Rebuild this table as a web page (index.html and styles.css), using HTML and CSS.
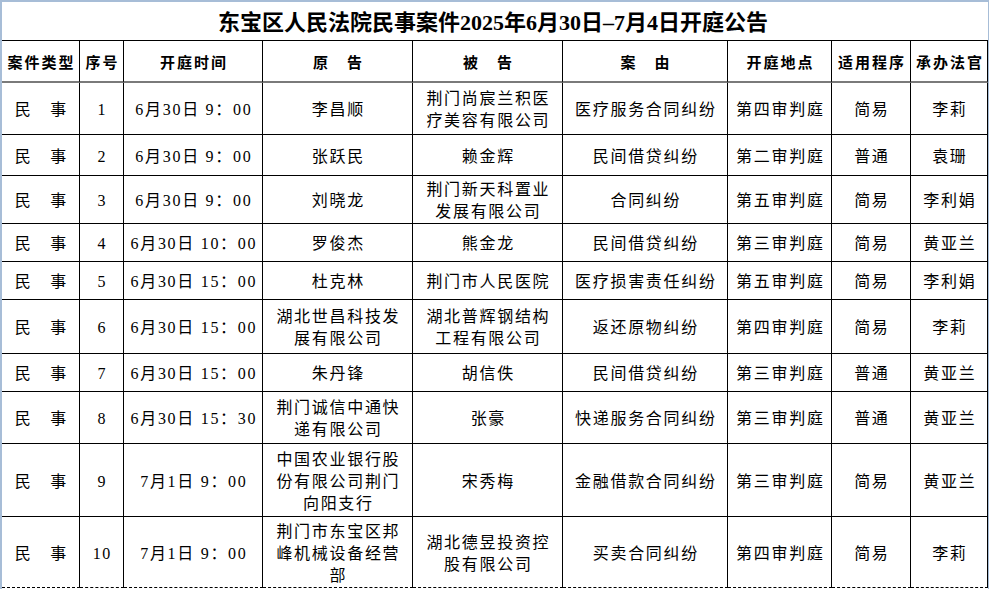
FILE: index.html
```html
<!DOCTYPE html>
<html lang="zh-CN">
<head>
<meta charset="utf-8">
<title>东宝区人民法院开庭公告</title>
<link rel="stylesheet" href="styles.css">
</head>
<body>
<div class="sheet">
  <h1 class="title">东宝区人民法院民事案件2025年6月30日–7月4日开庭公告</h1>
  <table class="grid">
    <colgroup>
      <col class="c-type"><col class="c-no"><col class="c-time"><col class="c-plt"><col class="c-def"><col class="c-reason"><col class="c-room"><col class="c-proc"><col class="c-judge">
    </colgroup>
    <thead>
      <tr class="h42">
        <th>案件类型</th><th>序号</th><th>开庭时间</th><th>原　告</th><th>被　告</th><th>案　由</th><th>开庭地点</th><th>适用程序</th><th>承办法官</th>
      </tr>
    </thead>
    <tbody>
      <tr class="h52"><td>民　事</td><td>1</td><td>6月30日 9：00</td><td>李昌顺</td><td>荆门尚宸兰积医疗美容有限公司</td><td>医疗服务合同纠纷</td><td>第四审判庭</td><td>简易</td><td>李莉</td></tr>
      <tr class="h41"><td>民　事</td><td>2</td><td>6月30日 9：00</td><td>张跃民</td><td>赖金辉</td><td>民间借贷纠纷</td><td>第二审判庭</td><td>普通</td><td>袁珊</td></tr>
      <tr class="h48"><td>民　事</td><td>3</td><td>6月30日 9：00</td><td>刘晓龙</td><td>荆门新天科置业发展有限公司</td><td>合同纠纷</td><td>第五审判庭</td><td>简易</td><td>李利娟</td></tr>
      <tr class="h38"><td>民　事</td><td>4</td><td>6月30日 10：00</td><td>罗俊杰</td><td>熊金龙</td><td>民间借贷纠纷</td><td>第三审判庭</td><td>简易</td><td>黄亚兰</td></tr>
      <tr class="h38"><td>民　事</td><td>5</td><td>6月30日 15：00</td><td>杜克林</td><td>荆门市人民医院</td><td>医疗损害责任纠纷</td><td>第五审判庭</td><td>简易</td><td>李利娟</td></tr>
      <tr class="h54"><td>民　事</td><td>6</td><td>6月30日 15：00</td><td>湖北世昌科技发展有限公司</td><td>湖北普辉钢结构工程有限公司</td><td>返还原物纠纷</td><td>第四审判庭</td><td>简易</td><td>李莉</td></tr>
      <tr class="h38"><td>民　事</td><td>7</td><td>6月30日 15：00</td><td>朱丹锋</td><td>胡信佚</td><td>民间借贷纠纷</td><td>第三审判庭</td><td>普通</td><td>黄亚兰</td></tr>
      <tr class="h52"><td>民　事</td><td>8</td><td>6月30日 15：30</td><td>荆门诚信中通快递有限公司</td><td>张豪</td><td>快递服务合同纠纷</td><td>第三审判庭</td><td>普通</td><td>黄亚兰</td></tr>
      <tr class="h73"><td>民　事</td><td>9</td><td>7月1日 9：00</td><td>中国农业银行股份有限公司荆门向阳支行</td><td>宋秀梅</td><td>金融借款合同纠纷</td><td>第三审判庭</td><td>简易</td><td>黄亚兰</td></tr>
      <tr class="h71 last"><td>民　事</td><td>10</td><td>7月1日 9：00</td><td>荆门市东宝区邦峰机械设备经营部</td><td>湖北德昱投资控股有限公司</td><td>买卖合同纠纷</td><td>第四审判庭</td><td>简易</td><td>李莉</td></tr>
    </tbody>
  </table>
</div>
</body>
</html>
```

FILE: styles.css
```css
* { box-sizing: border-box; }
html, body { margin: 0; padding: 0; background: #fff; }
body {
  font-family: "Liberation Serif", "Noto Sans CJK SC", serif;
  color: #000;
}
.sheet {
  width: 989px;
  height: 589px;
  overflow: hidden;
  border-top: 2px solid #a7bdd7;
  border-left: 2px solid #a7bdd7;
  border-right: 1px solid #a7bdd7;
}
.title {
  margin: 0;
  height: 38px;
  display: flex;
  align-items: center;
  justify-content: center;
  font-size: 22px;
  font-weight: bold;
  padding: 0 4px 2px 0;
}
.grid {
  width: 986px;
  table-layout: fixed;
  border-collapse: separate;
  border-spacing: 0;
  border-top: 1px solid #000;
}
.c-type { width: 78px; }
.c-no { width: 44px; }
.c-time { width: 139px; }
.c-plt { width: 150px; }
.c-def { width: 150px; }
.c-reason { width: 165px; }
.c-room { width: 104px; }
.c-proc { width: 79px; }
.c-judge { width: 77px; }

.grid th, .grid td {
  border-right: 1px solid #000;
  border-bottom: 1px solid #000;
  padding: 3px 4px 0 5.7px;
  text-align: center;
  vertical-align: middle;
  font-size: 16px;
  letter-spacing: 1.7px;
  line-height: 22px;
  font-weight: normal;
  overflow: hidden;
}
.grid th {
  font-size: 15px;
  font-weight: bold;
  letter-spacing: 2px;
  padding: 3px 0 0 2px;
  border-bottom: 2px solid #7a7a7a;
}
.h42 { height: 42px; }
.h52 { height: 52px; }
.h41 { height: 41px; }
.h48 { height: 48px; }
.h38 { height: 38px; }
.h54 { height: 54px; }
.h73 { height: 73px; }
.h71 { height: 71px; }
.grid .last td { border-bottom: 1px dashed #000; }
```
